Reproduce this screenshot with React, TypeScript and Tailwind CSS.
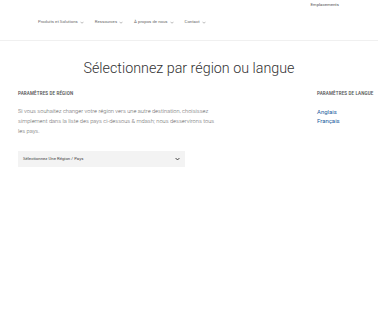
import React from "react";

const Chev = () => (
  <svg width="4" height="3" viewBox="0 0 8 5" className="ml-[2px] inline-block">
    <path d="M1 1l3 3 3-3" fill="none" stroke="#777" strokeWidth="1" />
  </svg>
);

export default function App() {
  const nav = ["Produits et Solutions", "Ressources", "À propos de nous", "Contact"];
  return (
    <div className="w-[378px] h-[320px] bg-white overflow-hidden text-[#444]" style={{ fontFamily: "Roboto, 'Liberation Sans', sans-serif" }}>
      <header className="h-[41px] border-b border-[#f0f0f0]">
        <div className="flex justify-end pr-[39px] pt-[2px] h-[6px]">
          <span className="text-[4.3px] leading-[6px] text-[#555]">Emplacements</span>
        </div>
        <nav className="flex items-center gap-[11px] pl-[38px] mt-[13px]">
          {nav.map((n) => (
            <span key={n} className="flex items-center text-[4.3px] leading-[6px] text-[#6a6a6a]">
              {n}
              <Chev />
            </span>
          ))}
        </nav>
      </header>
      <h1 className="text-center text-[14.3px] leading-[20px] font-light text-[#333] mt-[17px]">
        Sélectionnez par région ou langue
      </h1>
      <div className="flex justify-between pl-[18px] mt-[13px]">
        <div className="w-[212px]">
          <h2 className="text-[4.5px] leading-[6px] font-semibold tracking-[0.03em] text-[#555] uppercase">
            Paramètres de région
          </h2>
          <p className="w-[200px] text-[5.7px] leading-[10px] font-light text-[#666] mt-[9px]">
            Si vous souhaitez changer votre région vers une autre destination, choisissez simplement dans la liste des pays ci-dessous &amp; mdash; nous desservirons tous les pays.
          </p>
          <div className="mt-[15px] w-[167px] h-[16px] bg-[#f3f3f3] flex items-center justify-between pl-[5px] pr-[5px]">
            <span className="text-[4.3px] text-[#444]">Sélectionnez Une Région / Pays</span>
            <svg width="5" height="4" viewBox="0 0 8 5">
              <path d="M1 1l3 3 3-3" fill="none" stroke="#333" strokeWidth="1.5" />
            </svg>
          </div>
        </div>
        <div className="w-[61px] whitespace-nowrap">
          <h2 className="text-[4.5px] leading-[6px] font-semibold tracking-[0.03em] text-[#555] uppercase">
            Paramètres de langue
          </h2>
          <div className="mt-[10px] flex flex-col text-[6px] leading-[9px] text-[#1a5c9e]">
            <span>Anglais</span>
            <span>Français</span>
          </div>
        </div>
      </div>
    </div>
  );
}
